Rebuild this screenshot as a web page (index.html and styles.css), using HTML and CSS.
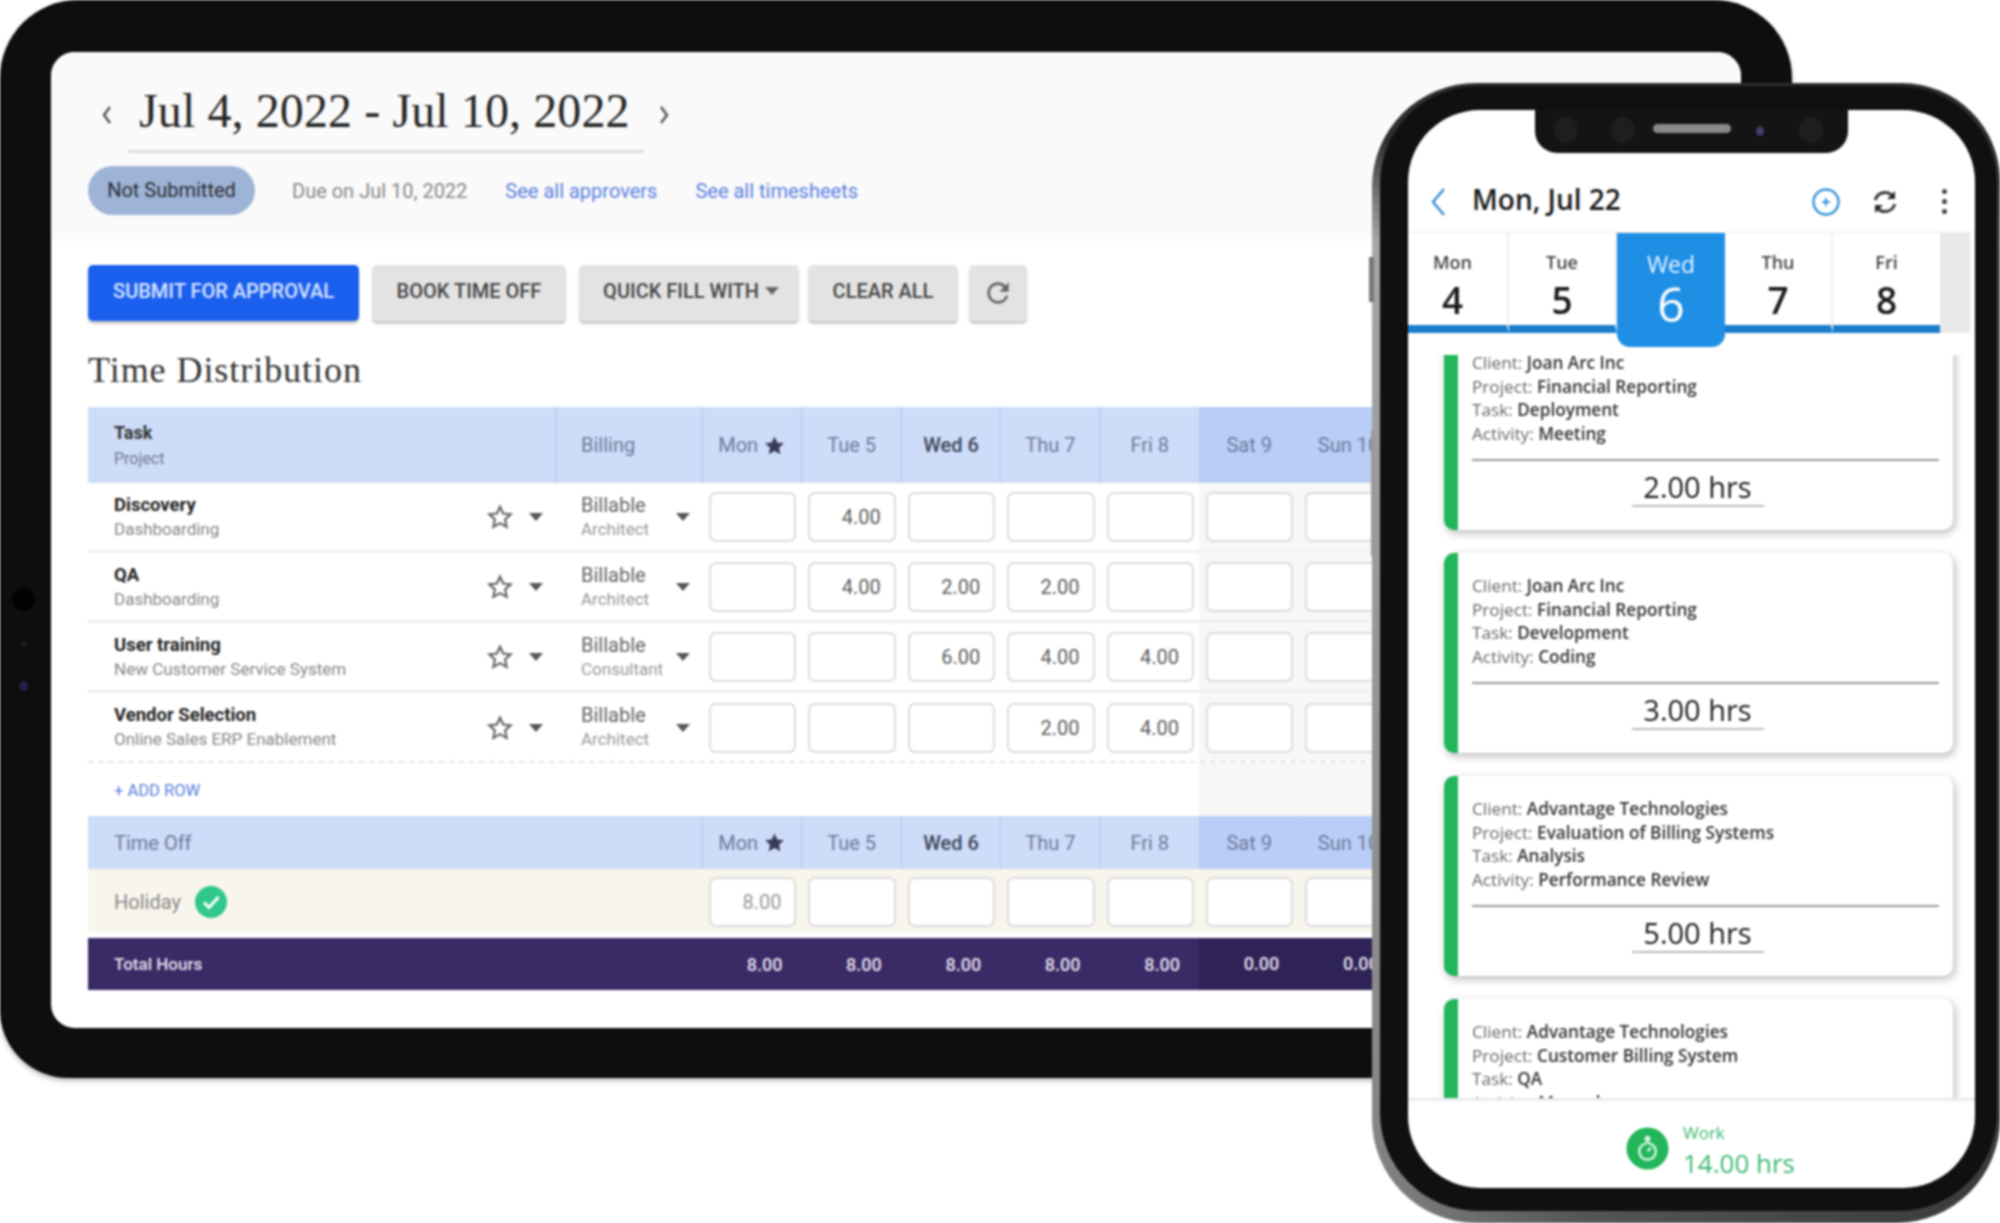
FILE: index.html
```html
<!DOCTYPE html>
<html lang="en">
<head>
  <meta charset="UTF-8">
  <title>Timesheet</title>
  <link rel="stylesheet" href="styles.css">
</head>
<body>
  <svg class="sprite" xmlns="http://www.w3.org/2000/svg">
    <symbol id="star" viewBox="0 0 24 24"><path d="M12 2.500l2.900 6.300 6.900.8-5.100 4.700 1.400 6.800-6.100-3.400-6.100 3.400 1.400-6.800-5.100-4.700 6.900-.8z"/></symbol>
    <symbol id="caret" viewBox="0 0 14 8"><path d="M0 0h14L7 8z"/></symbol>
  </svg>

  <div class="stage">
    <div class="tablet">
      <i class="sensor sensor-big"></i>
      <i class="sensor sensor-small"></i>
      <i class="sensor sensor-blue"></i>
      <div class="tablet-screen">
        <header class="week-head">
          <div class="week-title">
            <svg class="chev" viewBox="0 0 12 20"><path d="M9 2L3 10l6 8"/></svg>
            <h1>Jul 4, 2022 - Jul 10, 2022</h1>
            <svg class="chev" viewBox="0 0 12 20"><path d="M3 2l6 8-6 8"/></svg>
          </div>
          <div class="week-meta">
            <span class="pill">Not Submitted</span>
            <span class="due">Due on Jul 10, 2022</span>
            <a class="link">See all approvers</a>
            <a class="link">See all timesheets</a>
          </div>
        </header>

        <div class="sheet">
          <div class="toolbar">
            <button class="btn btn-primary btn-submit">SUBMIT FOR APPROVAL</button>
            <button class="btn btn-book">BOOK TIME OFF</button>
            <button class="btn btn-quick">QUICK FILL WITH <svg class="caret-sm"><use href="#caret"/></svg></button>
            <button class="btn btn-clear">CLEAR ALL</button>
            <button class="btn btn-refresh" aria-label="Refresh">
              <svg viewBox="0 0 24 24"><path d="M17.650 6.350A7.958 7.958 0 0 0 12 4c-4.420 0-7.990 3.580-7.990 8s3.570 8 7.990 8c3.730 0 6.840-2.550 7.730-6h-2.080A5.990 5.990 0 0 1 12 18c-3.310 0-6-2.690-6-6s2.690-6 6-6c1.660 0 3.140.69 4.220 1.780L13 11h7V4l-2.350 2.350z"/></svg>
            </button>
          </div>

          <h2>Time Distribution</h2>

          <div class="grid">
            <div class="row row-head">
              <div class="task-cell"><b>Task</b><span>Project</span></div>
              <div class="bill-cell">Billing</div>
              <div class="day">Mon <svg class="star-fill"><use href="#star"/></svg></div>
              <div class="day">Tue 5</div>
              <div class="day day-strong">Wed 6</div>
              <div class="day">Thu 7</div>
              <div class="day">Fri 8</div>
              <div class="day day-off">Sat 9</div>
              <div class="day day-off">Sun 10</div>
            </div>

            <div class="row row-task">
              <div class="task-cell"><div class="task-name"><b>Discovery</b><span>Dashboarding</span></div><svg class="star-line"><use href="#star"/></svg><svg class="caret"><use href="#caret"/></svg></div>
              <div class="bill-cell"><div class="bill-name"><b>Billable</b><span>Architect</span></div><svg class="caret"><use href="#caret"/></svg></div>
              <div class="cell"><input class="hours"></div>
              <div class="cell"><input class="hours" value="4.00"></div>
              <div class="cell"><input class="hours"></div>
              <div class="cell"><input class="hours"></div>
              <div class="cell"><input class="hours"></div>
              <div class="cell cell-off"><input class="hours"></div>
              <div class="cell cell-off"><input class="hours"></div>
            </div>

            <div class="row row-task">
              <div class="task-cell"><div class="task-name"><b>QA</b><span>Dashboarding</span></div><svg class="star-line"><use href="#star"/></svg><svg class="caret"><use href="#caret"/></svg></div>
              <div class="bill-cell"><div class="bill-name"><b>Billable</b><span>Architect</span></div><svg class="caret"><use href="#caret"/></svg></div>
              <div class="cell"><input class="hours"></div>
              <div class="cell"><input class="hours" value="4.00"></div>
              <div class="cell"><input class="hours" value="2.00"></div>
              <div class="cell"><input class="hours" value="2.00"></div>
              <div class="cell"><input class="hours"></div>
              <div class="cell cell-off"><input class="hours"></div>
              <div class="cell cell-off"><input class="hours"></div>
            </div>

            <div class="row row-task">
              <div class="task-cell"><div class="task-name"><b>User training</b><span>New Customer Service System</span></div><svg class="star-line"><use href="#star"/></svg><svg class="caret"><use href="#caret"/></svg></div>
              <div class="bill-cell"><div class="bill-name"><b>Billable</b><span>Consultant</span></div><svg class="caret"><use href="#caret"/></svg></div>
              <div class="cell"><input class="hours"></div>
              <div class="cell"><input class="hours"></div>
              <div class="cell"><input class="hours" value="6.00"></div>
              <div class="cell"><input class="hours" value="4.00"></div>
              <div class="cell"><input class="hours" value="4.00"></div>
              <div class="cell cell-off"><input class="hours"></div>
              <div class="cell cell-off"><input class="hours"></div>
            </div>

            <div class="row row-task row-last">
              <div class="task-cell"><div class="task-name"><b>Vendor Selection</b><span>Online Sales ERP Enablement</span></div><svg class="star-line"><use href="#star"/></svg><svg class="caret"><use href="#caret"/></svg></div>
              <div class="bill-cell"><div class="bill-name"><b>Billable</b><span>Architect</span></div><svg class="caret"><use href="#caret"/></svg></div>
              <div class="cell"><input class="hours"></div>
              <div class="cell"><input class="hours"></div>
              <div class="cell"><input class="hours"></div>
              <div class="cell"><input class="hours" value="2.00"></div>
              <div class="cell"><input class="hours" value="4.00"></div>
              <div class="cell cell-off"><input class="hours"></div>
              <div class="cell cell-off"><input class="hours"></div>
            </div>

            <div class="row row-add">
              <a class="add-link">+ ADD ROW</a>
              <div class="cell-off add-off"></div>
            </div>

            <div class="row row-head row-off-head">
              <div class="off-title">Time Off</div>
              <div class="day">Mon <svg class="star-fill"><use href="#star"/></svg></div>
              <div class="day">Tue 5</div>
              <div class="day day-strong">Wed 6</div>
              <div class="day">Thu 7</div>
              <div class="day">Fri 8</div>
              <div class="day day-off">Sat 9</div>
              <div class="day day-off">Sun 10</div>
            </div>

            <div class="row row-holiday">
              <div class="off-title">Holiday
                <svg class="ok" viewBox="0 0 32 32"><circle cx="16" cy="16" r="16"/><path d="M9 16.500l5 5 9.500-10.500"/></svg>
              </div>
              <div class="cell"><input class="hours hours-muted" value="8.00"></div>
              <div class="cell"><input class="hours"></div>
              <div class="cell"><input class="hours"></div>
              <div class="cell"><input class="hours"></div>
              <div class="cell"><input class="hours"></div>
              <div class="cell"><input class="hours"></div>
              <div class="cell"><input class="hours"></div>
            </div>

            <div class="row row-total">
              <div class="off-title">Total Hours</div>
              <div class="sum">8.00</div>
              <div class="sum">8.00</div>
              <div class="sum">8.00</div>
              <div class="sum">8.00</div>
              <div class="sum">8.00</div>
              <div class="sum sum-off">0.00</div>
              <div class="sum sum-off">0.00</div>
            </div>
          </div>
        </div>
      </div>
    </div>

    <div class="phone">
      <i class="side-btn side-btn-a"></i>
      <i class="side-btn side-btn-b"></i>
      <div class="bezel">
        <div class="phone-screen">
          <div class="notch">
            <i class="lens lens-a"></i>
            <i class="lens lens-b"></i>
            <i class="speaker"></i>
            <i class="lens-dot"></i>
            <i class="lens lens-c"></i>
          </div>

          <div class="app-bar">
            <svg class="back" viewBox="0 0 16 30"><path d="M14 2L3 15l11 13"/></svg>
            <span class="app-title">Mon, Jul 22</span>
            <svg class="app-icon" viewBox="0 0 30 30"><circle class="add-ring" cx="15" cy="15" r="12.500"/><path class="add-plus" d="M15 9.500l1.300 4.200 4.200 1.300-4.200 1.300-1.300 4.200-1.300-4.200L9.500 15l4.200-1.300z"/></svg>
            <svg class="app-icon sync" viewBox="0 0 30 30">
              <path class="sync-arc" d="M23 9.500A10 10 0 0 0 5.300 13M7 20.500A10 10 0 0 0 24.700 17"/>
              <path class="sync-head" d="M25 4v8h-8zM5 26v-8h8z"/>
            </svg>
            <span class="kebab"><i></i><i></i><i></i></span>
          </div>

          <div class="strip">
            <div class="strip-day strip-day-a"><span>Mon</span><b>4</b></div>
            <div class="strip-day strip-day-b"><span>Tue</span><b>5</b></div>
            <div class="strip-day strip-active"><span>Wed</span><b>6</b></div>
            <div class="strip-day strip-day-b"><span>Thu</span><b>7</b></div>
            <div class="strip-day strip-day-c"><span>Fri</span><b>8</b></div>
            <div class="strip-rest"></div>
          </div>

          <div class="entries">
            <div class="entry entry-first">
              <p>Client: <b>Joan Arc Inc</b></p>
              <p>Project: <b>Financial Reporting</b></p>
              <p>Task: <b>Deployment</b></p>
              <p>Activity: <b>Meeting</b></p>
              <div class="entry-hrs"><span>2.00 hrs</span></div>
            </div>
            <div class="entry">
              <p>Client: <b>Joan Arc Inc</b></p>
              <p>Project: <b>Financial Reporting</b></p>
              <p>Task: <b>Development</b></p>
              <p>Activity: <b>Coding</b></p>
              <div class="entry-hrs"><span>3.00 hrs</span></div>
            </div>
            <div class="entry">
              <p>Client: <b>Advantage Technologies</b></p>
              <p>Project: <b>Evaluation of Billing Systems</b></p>
              <p>Task: <b>Analysis</b></p>
              <p>Activity: <b>Performance Review</b></p>
              <div class="entry-hrs"><span>5.00 hrs</span></div>
            </div>
            <div class="entry">
              <p>Client: <b>Advantage Technologies</b></p>
              <p>Project: <b>Customer Billing System</b></p>
              <p>Task: <b>QA</b></p>
              <p>Activity: <b>Manual</b></p>
              <div class="entry-hrs"><span>1.00 hrs</span></div>
            </div>
          </div>

          <div class="summary">
            <svg class="work-icon" viewBox="0 0 44 44">
              <circle class="work-bg" cx="22" cy="22" r="21.500"/>
              <circle class="work-ring" cx="22" cy="25" r="8.500"/>
              <circle class="work-dot" cx="22" cy="12" r="3"/>
              <path class="work-ring" d="M22 25l3.500-4"/>
            </svg>
            <div class="summary-text"><span>Work</span><b>14.00 hrs</b></div>
          </div>
        </div>
      </div>
    </div>
  </div>
</body>
</html>
```

FILE: styles.css
```css
* {
  box-sizing: border-box;
}
html, body {
  margin: 0;
  background: #fff;
  overflow: hidden;
}
.sprite {
  display: none;
}
i {
  display: block;
}
.stage {
  position: relative;
  width: 2000px;
  height: 1223px;
  overflow: hidden;
  font-family: Roboto, "Liberation Sans", sans-serif;
  filter: blur(0.8px);
}

/* tablet */
.tablet {
  position: absolute;
  left: 0;
  top: 0;
  width: 1792px;
  height: 1078px;
  padding: 52px 51px 50px;
  background: #0e0e0e;
  border-radius: 78px 78px 78px 68px;
  box-shadow: 0 3px 5px rgba(0, 0, 0, 0.25);
}
.sensor {
  position: absolute;
  border-radius: 50%;
}
.sensor-big {
  left: 12px;
  top: 588px;
  width: 23px;
  height: 23px;
  background: #030303;
}
.sensor-small {
  left: 21px;
  top: 642px;
  width: 5px;
  height: 5px;
  background: #222;
}
.sensor-blue {
  left: 19px;
  top: 681px;
  width: 9px;
  height: 10px;
  background: #23204f;
}
.tablet-screen {
  height: 100%;
  background: #fff;
  border-radius: 24px;
  overflow: hidden;
}
.week-head {
  height: 188px;
  padding: 29px 37px 0;
  background: #fafafa;
}
.week-title {
  display: flex;
  align-items: center;
  color: #333;
}
.week-title h1 {
  margin: 0 15px;
  padding: 0 13px 9px 11px;
  border-bottom: 3px solid #dedede;
  font: 400 48px/60px "Liberation Serif", serif;
  letter-spacing: 0.1px;
  color: #262626;
  white-space: nowrap;
}
.chev {
  width: 12px;
  height: 20px;
  margin-bottom: 4px;
  fill: none;
  stroke: #555;
  stroke-width: 2.500;
}
.chev:first-child {
  margin-left: 13px;
}
.week-meta {
  display: flex;
  align-items: center;
  gap: 38px;
  margin-top: 13px;
  font-size: 20px;
}
.pill {
  width: 167px;
  height: 49px;
  margin-right: -1px;
  line-height: 49px;
  text-align: center;
  background: #9eb4d6;
  border-radius: 25px;
  color: #2c2c33;
  white-space: nowrap;
}
.due {
  color: #888;
}
.link {
  color: #5a80e0;
}
.sheet {
  padding: 25px 37px 0;
}
.toolbar {
  display: flex;
  height: 56px;
}
.btn {
  height: 56px;
  padding: 0 0 4px;
  border: 0;
  border-radius: 5px;
  background: #e3e3e3;
  box-shadow: 0 3px 2px rgba(0, 0, 0, 0.2);
  font: 500 20px Roboto, sans-serif;
  color: #444;
  white-space: nowrap;
}
.btn-primary {
  background: #1a5fee;
  color: #dbe6ff;
}
.btn-submit {
  width: 271px;
  margin-right: 13px;
}
.btn-book {
  width: 194px;
  margin-right: 13px;
}
.btn-quick {
  width: 220px;
  margin-right: 9px;
  padding-left: 4px;
}
.btn-clear {
  width: 150px;
  margin-right: 11px;
}
.btn-refresh {
  width: 58px;
  padding: 0;
}
.btn-refresh svg {
  width: 32px;
  height: 32px;
  fill: #666;
  vertical-align: middle;
}
.caret-sm {
  width: 14px;
  height: 8px;
  margin-left: 1px;
  fill: #666;
  vertical-align: 3px;
}
h2 {
  margin: 27px 0 15px;
  font: 400 36px/44px "Liberation Serif", serif;
  letter-spacing: 0.95px;
  color: #333;
}

/* timesheet grid */
.grid {
  width: 1308px;
}
.row {
  display: grid;
  grid-template-columns: 467px 147px repeat(7, 99.4px);
}
.row-head {
  height: 76px;
  background: #cddcf9;
  color: #6d7b99;
  font-size: 20px;
}
.task-cell {
  display: flex;
  align-items: center;
  padding-left: 26px;
}
.row-head .task-cell {
  display: block;
  padding-top: 14px;
  line-height: 24px;
}
.row-head .task-cell b {
  display: block;
  font-size: 18px;
  font-weight: 700;
  color: #333;
}
.row-head .task-cell span {
  font-size: 16px;
  color: #6f7a90;
}
.bill-cell {
  display: flex;
  align-items: center;
  padding-left: 25px;
  border-left: 1px solid #b8c8e8;
}
.day {
  display: flex;
  align-items: center;
  justify-content: center;
  gap: 5px;
  border-left: 1px solid #b8c8e8;
  white-space: nowrap;
  overflow: hidden;
}
.day-strong {
  color: #3d4657;
  font-weight: 500;
}
.day-off {
  background: #b9cdf7;
}
.star-fill {
  width: 23px;
  height: 23px;
  fill: #3a3a5c;
}
.row-task {
  height: 70px;
  padding-top: 1px;
  border-bottom: 3px solid #f0f0f0;
}
.row-task.row-last {
  border-bottom: 2px dashed #e6e6e6;
}
.row-task .task-cell {
  padding-left: 26px;
}
.row-task .bill-cell {
  padding-left: 26px;
  border: 0;
}
.task-name {
  flex: 1;
}
.task-name b,
.bill-name b {
  display: block;
  line-height: 24px;
  white-space: nowrap;
}
.task-name b {
  font-size: 18.500px;
  font-weight: 700;
  color: #222;
}
.task-name span,
.bill-name span {
  display: block;
  line-height: 25px;
  white-space: nowrap;
  color: #888;
  font-size: 17px;
}
.bill-name {
  flex: 1;
}
.bill-name b {
  font-size: 20px;
  font-weight: 400;
  color: #666;
}
.bill-name span {
  color: #9a9a9a;
}
.star-line {
  width: 26px;
  height: 26px;
  margin-right: 16px;
  fill: none;
  stroke: #666;
  stroke-width: 2;
}
.caret {
  flex: none;
  width: 14px;
  height: 8px;
  margin-right: 12px;
  fill: #555;
}
.cell {
  display: flex;
  align-items: center;
  padding: 0 5px 0 7px;
}
.cell-off {
  background: #f7f7f7;
}
.hours {
  width: 100%;
  height: 50px;
  padding: 0 13px;
  border: 2px solid #dcdcdc;
  border-radius: 7px;
  background: #fff;
  font: 400 20px Roboto, sans-serif;
  color: #5c5c5c;
  text-align: right;
  outline: none;
}
.hours-muted {
  color: #999;
}
.row-add {
  position: relative;
  height: 53px;
  display: block;
}
.add-link {
  display: block;
  padding-left: 26px;
  line-height: 55px;
  font-size: 16.500px;
  color: #5a80e0;
}
.add-off {
  position: absolute;
  left: 1111px;
  top: 0;
  width: 199px;
  height: 53px;
}
.row-off-head {
  height: 53px;
  grid-template-columns: 614px repeat(7, 99.4px);
}
.off-title {
  display: flex;
  align-items: center;
  gap: 14px;
  padding-left: 26px;
}
.row-holiday {
  height: 63px;
  padding-top: 2px;
  grid-template-columns: 614px repeat(7, 99.4px);
  background: #f8f5ec;
  color: #888;
  font-size: 20px;
}
.ok {
  width: 32px;
  height: 32px;
}
.ok circle {
  fill: #2ec88c;
}
.ok path {
  fill: none;
  stroke: #fff;
  stroke-width: 3;
}
.row-total {
  height: 52px;
  margin-top: 6px;
  grid-template-columns: 614px repeat(7, 99.4px);
  background: #3a2a66;
  color: #e6e3ef;
  font-size: 18px;
  font-weight: 500;
}
.row-total .off-title {
  font-size: 17px;
}
.sum {
  align-self: center;
  padding-right: 19px;
  text-align: right;
}
.sum-off {
  align-self: stretch;
  line-height: 52px;
  background: #2f2256;
}

/* phone */
.phone {
  position: absolute;
  left: 1372px;
  top: 83px;
  width: 628px;
  height: 1140px;
  padding: 3px 3px 12px 8px;
  border-radius: 104px 98px 104px 104px;
  background:
    linear-gradient(to bottom, #2e2e2e 0, #2e2e2e 5%, rgba(46, 46, 46, 0) 14%),
    linear-gradient(100deg, #cfcfcf 0, #a5a5a5 4%, #555 50%, #3a3a3a 100%);
}
.side-btn {
  position: absolute;
  background: #777;
}
.side-btn-a {
  left: -3px;
  top: 174px;
  width: 5px;
  height: 45px;
}
.side-btn-b {
  left: -1px;
  top: 347px;
  width: 4px;
  height: 126px;
  background: #999;
}
.bezel {
  height: 100%;
  padding: 24px 22px 23px 28px;
  background: #101010;
  border-radius: 98px;
}
.phone-screen {
  position: relative;
  display: flex;
  flex-direction: column;
  height: 100%;
  background: #fff;
  border-radius: 72px;
  overflow: hidden;
  font-family: "Open Sans", sans-serif;
}
.notch {
  position: absolute;
  left: 127px;
  top: 0;
  width: 313px;
  height: 43px;
  background: #141414;
  border-radius: 0 0 22px 22px;
}
.lens {
  position: absolute;
  top: 7px;
  width: 24px;
  height: 26px;
  background: #1e1e1e;
  border-radius: 50%;
}
.lens-a {
  left: 19px;
}
.lens-b {
  left: 76px;
}
.lens-c {
  left: 264px;
}
.speaker {
  position: absolute;
  left: 118px;
  top: 14px;
  width: 78px;
  height: 9px;
  border-radius: 5px;
  background: #8a8a8a;
}
.lens-dot {
  position: absolute;
  left: 221px;
  top: 16px;
  width: 8px;
  height: 10px;
  border-radius: 50%;
  background: #3c3f70;
}
.app-bar {
  display: flex;
  align-items: center;
  height: 123px;
  padding: 60px 28px 0 22px;
}
.back {
  width: 16px;
  height: 30px;
  fill: none;
  stroke: #3b8dd0;
  stroke-width: 2.500;
}
.app-title {
  flex: 1;
  margin: 0 0 6px 26px;
  font-size: 28px;
  font-weight: 600;
  color: #1a1a1a;
}
.app-icon {
  width: 30px;
  height: 30px;
}
.add-ring {
  fill: none;
  stroke: #3b96dc;
  stroke-width: 2.500;
}
.add-plus {
  fill: #3b96dc;
}
.sync {
  margin-left: 29px;
}
.sync-arc {
  fill: none;
  stroke: #3a3a3a;
  stroke-width: 3;
}
.sync-head {
  fill: #2a2a2a;
}
.kebab {
  display: flex;
  flex-direction: column;
  gap: 5px;
  margin-left: 42px;
}
.kebab i {
  width: 5px;
  height: 5px;
  border-radius: 50%;
  background: #444;
}
.strip {
  display: flex;
  flex: none;
  height: 100px;
  position: relative;
  z-index: 1;
  box-shadow: 0 -1px 0 #ececec;
}
.strip-day {
  display: flex;
  flex-direction: column;
  align-items: center;
  width: 101px;
  height: 100px;
  padding-top: 16px;
  border-bottom: 8px solid #1a7dcc;
  border-right: 2px solid #eee;
  color: #1a1a1a;
}
.strip-day-a {
  padding-right: 10px;
}
.strip-day-b {
  width: 108px;
}
.strip-day-c {
  width: 107px;
  border-right: 0;
}
.strip-day span {
  font-size: 18px;
  font-weight: 600;
  line-height: 26px;
  color: #444;
}
.strip-day b {
  font-size: 37px;
  font-weight: 600;
  line-height: 50px;
}
.strip-active {
  width: 108px;
  height: 114px;
  border: 0;
  border-radius: 0 0 13px 13px;
  background: #1f8fe6;
  color: #fff;
}
.strip-active span {
  font-size: 23px;
  font-weight: 400;
  color: #e8f4ff;
  line-height: 30px;
}
.strip-active b {
  font-size: 48px;
  font-weight: 400;
  line-height: 50px;
}
.strip-rest {
  width: 30px;
  height: 100px;
  background: #e8e8e8;
}
.entries {
  flex: 1;
  min-height: 0;
  margin-top: 22px;
  padding: 0 22px 0 36px;
  overflow: hidden;
}
.entry {
  height: 200px;
  margin-bottom: 23px;
  padding: 21px 14px 0 14px;
  border-left: 14px solid #22b55a;
  border-radius: 10px;
  background: #fff;
  box-shadow: 2px 3px 8px rgba(0, 0, 0, 0.28);
}
.entry-first {
  margin-top: -25px;
}
.entry p {
  margin: 0;
  font-size: 17.200px;
  line-height: 23.500px;
  color: #666;
  white-space: nowrap;
}
.entry b {
  font-weight: 600;
  color: #333;
}
.entry-hrs {
  margin-top: 14px;
  padding: 8px 16px 0 0;
  border-top: 2px solid #999;
  text-align: center;
}
.entry-hrs span {
  display: inline-block;
  width: 132px;
  border-bottom: 2px solid #bbb;
  font-size: 29px;
  line-height: 36px;
  color: #1a1a1a;
}
.summary {
  display: flex;
  flex: none;
  align-items: center;
  justify-content: center;
  gap: 14px;
  height: 90px;
  padding: 8px 0 0 38px;
  border-top: 3px solid #ececec;
}
.work-icon {
  width: 43px;
  height: 43px;
}
.work-bg {
  fill: #22b55a;
}
.work-ring {
  fill: none;
  stroke: #d8f5e2;
  stroke-width: 2.500;
}
.work-dot {
  fill: #d8f5e2;
}
.summary-text {
  display: flex;
  flex-direction: column;
  margin-top: 4px;
  color: #3cb871;
}
.summary-text span {
  font-size: 17px;
  line-height: 24px;
}
.summary-text b {
  font-size: 26px;
  font-weight: 400;
  line-height: 36px;
}
```
